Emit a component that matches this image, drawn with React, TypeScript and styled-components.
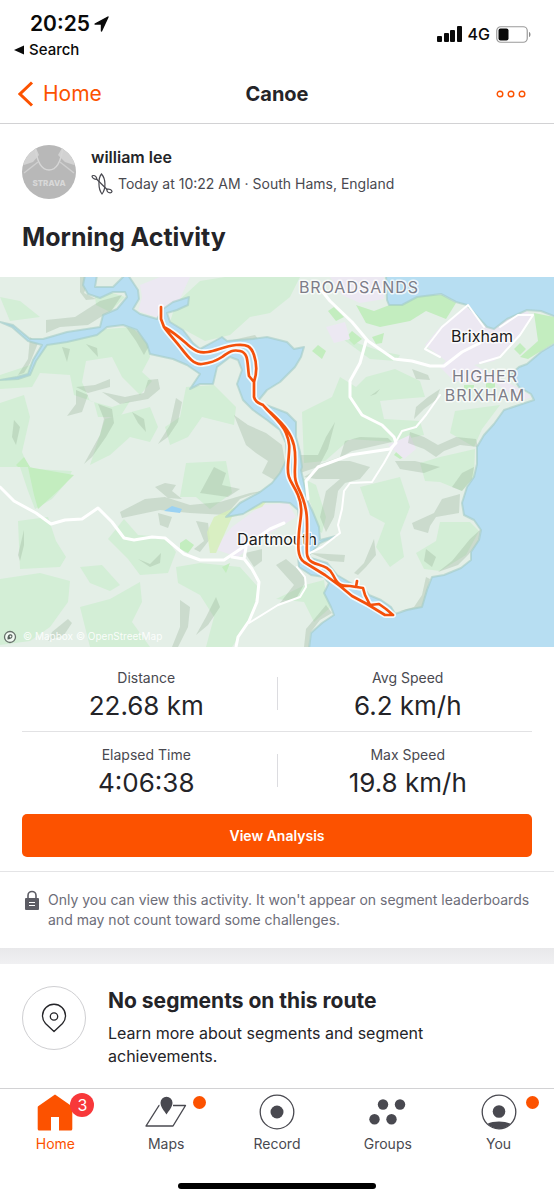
import React from "react";
import styled, { createGlobalStyle } from "styled-components";

const ORANGE = "#fc5200";
const INK = "#242428";
const SLATE = "#494950";
const SANS = 'Inter, "Liberation Sans", sans-serif';

const GlobalStyle = createGlobalStyle`
  *, *::before, *::after { box-sizing: border-box; }
  body { margin: 0; background: #fff; color: ${INK}; font-family: ${SANS}; }
  h1, h2, p, dl, dd { margin: 0; }
  button { border: 0; background: none; padding: 0; font: inherit; color: inherit; cursor: pointer; }
  a { color: inherit; text-decoration: none; }
  svg { display: block; flex: none; }
`;

const Page = styled.div`
  min-height: 100vh;
  display: flex;
  flex-direction: column;
`;

const StatusBar = styled.div`
  display: flex;
  justify-content: space-between;
  align-items: flex-start;
  height: 64px;
  padding: 12px 23px 0 14px;
  color: #0a0a0a;
`;

const Clock = styled.div`
  display: flex;
  align-items: center;
  gap: 4px;
  padding-left: 16px;
  font-size: 21px;
  line-height: 24px;
  font-weight: 600;
`;

const BackToApp = styled.button`
  display: flex;
  align-items: center;
  gap: 5px;
  margin-top: 4px;
  font-size: 15px;
  line-height: 20px;
  font-weight: 500;
`;

const Signals = styled.div`
  display: flex;
  align-items: center;
  gap: 6px;
  padding-top: 12px;
  font-size: 16px;
  line-height: 20px;
  font-weight: 500;
`;

const NavBar = styled.header`
  display: grid;
  grid-template-columns: 1fr auto 1fr;
  align-items: center;
  height: 60px;
  padding: 0 28px 0 18px;
  border-bottom: 1px solid #d2d2d4;
`;

const BackButton = styled.button`
  display: flex;
  align-items: center;
  gap: 9px;
  color: ${ORANGE};
  font-size: 21px;
  line-height: 28px;
`;

const NavTitle = styled.h1`
  padding-left: 10px;
  font-size: 20px;
  line-height: 28px;
  font-weight: 700;
`;

const MoreButton = styled.button`
  justify-self: end;
`;

const Author = styled.section`
  display: flex;
  align-items: flex-start;
  gap: 15px;
  padding: 21px 22px 0;
`;

const AuthorName = styled.p`
  font-size: 16px;
  line-height: 24px;
  font-weight: 600;
`;

const AuthorMeta = styled.p`
  display: flex;
  align-items: center;
  gap: 5px;
  margin-top: 3px;
  font-size: 14px;
  line-height: 24px;
  color: ${SLATE};
`;

const ActivityTitle = styled.h2`
  padding: 22px 22px 24px;
  font-size: 25px;
  line-height: 32px;
  font-weight: 700;
`;

const MapLink = styled.a`
  display: block;
`;

const MapCanvas = styled.svg`
  width: 100%;
  height: auto;
`;

const Stats = styled.dl`
  padding: 8px 16px 0;
`;

const StatRow = styled.div`
  display: grid;
  grid-template-columns: 1fr 1px 1fr;
  align-items: center;
  height: 76px;
`;

const StatRule = styled.div`
  height: 1px;
  margin: 0 6px;
  background: #e2e2e4;
`;

const StatSplit = styled.div`
  height: 33px;
  background: #dcdce0;
`;

const Stat = styled.div`
  padding-top: 4px;
  text-align: center;
`;

const StatLabel = styled.dt`
  font-size: 14px;
  line-height: 20px;
  color: ${SLATE};
`;

const StatValue = styled.dd`
  margin-top: 2px;
  font-size: 26px;
  line-height: 32px;
`;

const Action = styled.div`
  padding: 6px 22px 14px;
  border-bottom: 1px solid #e4e4e6;
`;

const PrimaryButton = styled.button`
  width: 100%;
  height: 43px;
  border-radius: 5px;
  background: ${ORANGE};
  color: #fff;
  font-size: 14px;
  line-height: 20px;
  font-weight: 600;
`;

const Notice = styled.div`
  display: flex;
  align-items: flex-start;
  gap: 9px;
  padding: 18px 16px 18px 25px;
  color: #6d6d78;
`;

const NoticeText = styled.p`
  max-width: 500px;
  font-size: 14px;
  line-height: 20px;
`;

const Band = styled.div`
  height: 16px;
  background: linear-gradient(#e8e8ea, #f0f0f2);
`;

const Segments = styled.section`
  display: flex;
  align-items: flex-start;
  gap: 22px;
  padding: 22px 22px 20px;
`;

const RoundIcon = styled.div`
  display: grid;
  place-items: center;
  flex: none;
  width: 64px;
  height: 64px;
  border: 1px solid #cfcfd2;
  border-radius: 50%;
`;

const SegmentsTitle = styled.h2`
  font-size: 21px;
  line-height: 30px;
  font-weight: 700;
`;

const SegmentsText = styled.p`
  max-width: 350px;
  margin-top: 6px;
  font-size: 16px;
  line-height: 23px;
`;

const TabBar = styled.nav`
  margin-top: auto;
  border-top: 1px solid #d2d2d4;
`;

const Tabs = styled.div`
  display: grid;
  grid-template-columns: repeat(5, 1fr);
  height: 94px;
`;

const Tab = styled.a<{ $active?: boolean }>`
  display: flex;
  flex-direction: column;
  align-items: center;
  gap: 4px;
  padding-top: 5px;
  font-size: 14px;
  line-height: 20px;
  color: ${(p) => (p.$active ? ORANGE : SLATE)};
`;

const TabIcon = styled.span`
  position: relative;
  display: grid;
  place-items: center;
  width: 42px;
  height: 36px;
`;

const CountBadge = styled.span`
  position: absolute;
  top: -1px;
  right: -18px;
  width: 24px;
  height: 24px;
  border-radius: 50%;
  background: #f8383a;
  color: #fff;
  font-size: 16px;
  line-height: 24px;
  text-align: center;
`;

const DotBadge = styled.span`
  position: absolute;
  top: 2px;
  right: -19px;
  width: 13px;
  height: 13px;
  border-radius: 50%;
  background: ${ORANGE};
`;

const HomeIndicator = styled.div`
  width: 198px;
  height: 6px;
  margin: 0 auto 11px;
  border-radius: 3px;
  background: #000;
`;

const hills = [
  "M46,43 L75,40 L100,24 L122,18 L112,33 L88,48 L60,50 L46,56Z",
  "M62,70 L70,72 L67,85Z",
  "M86,67 L97,71 L98,80Z",
  "M76,110 L95,108 L110,102 L110,110 L88,116Z",
  "M76,113 L88,118 L82,135 L67,139 L76,127Z",
  "M102,115 L125,120 L144,116 L148,103 L158,102 L160,112 L148,122 L120,127Z",
  "M98,127 L112,132 L114,146 L106,160 L92,180 L84,187 L100,158 L104,142Z",
  "M132,135 L144,142 L146,155 L138,146Z",
  "M176,121 L182,125 L178,145 L168,160 L158,167 L170,148Z",
  "M14,143 L20,150 L16,168 L12,160Z",
  "M30,60 L38,66 L30,86 L24,96 L18,98 L28,82Z",
  "M126,50 L140,55 L150,67 L144,78 L136,64Z",
  "M80,0 L90,0 L84,16 L96,22 L86,23 L80,15Z",
  "M120,235 L145,222 L165,220 L190,228 L220,225 L250,216 L262,214 L240,222 L226,238 L190,236 L160,233 L122,241Z",
  "M155,210 L165,206 L176,208 L172,214 L182,222 L168,221Z",
  "M200,216 L214,190 L226,196 L222,208 L240,212 L228,220Z",
  "M158,236 L172,240 L168,251 L160,248Z",
  "M196,244 L208,246 L210,262 L200,275 L194,272 L204,264Z",
  "M138,282 L150,287 L161,276 L160,286 L150,290Z",
  "M18,278 L24,253 L24,268 L20,284Z",
  "M180,323 L190,330 L188,350 L178,370 H172 L180,350Z",
  "M216,320 L220,330 L208,348 L196,358 L206,340Z",
  "M52,355 L68,342 L72,346 L64,358 L48,364Z",
  "M234,138 L248,148 L266,156 L282,168 L286,190 L278,205 L262,196 L268,184 L256,176 L246,168Z",
  "M210,68 L222,60 L226,68 L212,73Z M228,64 L255,58 L258,62 L236,67Z",
  "M299,178 L318,178 L326,160 L335,145 L328,172 L320,187 L340,180 L345,164 L360,160 L388,161 L392,165 L370,170 L352,174 L330,186 L300,196Z",
  "M416,130 L428,120 L440,112 L436,123 L424,132 L414,142Z",
  "M410,155 L424,160 L438,168 L456,160 L476,162 L478,170 L460,168 L444,174 L436,180 L424,172 L408,166Z",
  "M412,92 L428,98 L430,103 L416,102Z M370,119 L380,112 L376,117Z",
  "M304,200 L330,184 L350,184 L370,190 L360,202 L345,206 L338,214 L334,240 L326,255 L320,240 L326,214 L340,202 L316,202Z",
  "M395,184 L415,184 L440,190 L424,196 L400,192Z",
  "M434,236 L442,222 L460,217 L459,236 L436,240 L430,249 L428,256 L414,252 L412,246Z",
  "M354,296 L364,286 L374,262 L376,278 L366,290 L358,298Z",
  "M310,276 L345,278 L344,285 L330,284Z",
  "M452,210 L462,196 L474,190 L472,202 L462,214Z",
  "M426,272 L436,280 L432,290 L424,284Z",
  "M470,262 L481,252 L478,266 L468,278 L458,288 L438,295 L452,284Z",
  "M414,330 L422,318 L426,300 L430,302 L422,332 L400,334Z",
  "M310,356 L320,343 L332,336 L326,328 L316,340 L306,352 L304,370 H309Z",
  "M245,276 L262,272 L262,284 L254,290Z",
  "M276,288 L286,282 L300,294 L306,304 L296,322 L280,326 L294,308Z",
];

const meadows = [
  "M0,20 L20,24 L40,40 L10,44Z",
  "M94,10 L125,20 L110,35 L96,28Z",
  "M106,52 L132,50 L148,68 L150,80 L142,95 L152,104 L140,118 L122,100 L112,80 L86,84 L82,105 L90,124 L112,130 L130,124 L120,140 L98,140 L94,125 L74,118 L70,98 L40,96 L32,110 L0,112 V98 L30,88 L44,66 L78,60Z",
  "M0,126 L24,118 L30,140 L22,175 L28,190 L0,190Z",
  "M186,110 L214,108 L236,130 L234,148 L202,140 L188,160 L170,168 L165,150 L180,140Z",
  "M176,26 L200,4 L225,0 H300 L290,20 L270,36 L250,40 L230,58 L205,64 L170,45Z",
  "M105,142 L150,130 L158,150 L150,165 L130,160 L110,178 L90,188Z",
  "M18,184 L34,192 L72,194 L66,206 L52,222 L35,232 L28,214Z",
  "M18,244 L48,240 L56,264 L66,280 L60,290 L20,292Z",
  "M0,302 L40,296 L70,304 L68,325 L50,350 L30,364 L0,368Z",
  "M80,290 L102,288 L120,308 L110,314 L90,306Z",
  "M108,262 L124,242 L138,258 L165,260 L176,275 L168,296 L140,298 L128,282Z",
  "M186,186 L226,184 L232,216 L210,232 L196,220 L180,220Z",
  "M176,290 L200,286 L240,290 L258,310 L252,340 L232,370 H206 L214,340 L200,318 L178,306Z",
  "M80,330 L110,322 L140,305 L142,325 L132,345 L150,370 H90Z",
  "M302,135 L332,120 L340,100 L356,110 L366,100 L395,92 L420,104 L425,120 L400,122 L380,124 L384,142 L420,144 L424,158 L392,165 L350,162 L325,184 L304,186Z",
  "M455,134 L500,128 L482,152 L474,170 L450,156Z",
  "M360,210 L400,200 L410,230 L400,256 L404,280 L390,290 L376,270 L385,246 L370,238Z",
  "M440,180 L475,172 L474,200 L462,214 L440,205 L425,204 L420,186Z",
  "M440,245 L470,245 L479,254 L466,278 L440,294 L424,292 L416,276 L436,264Z",
  "M305,308 L324,303 L326,318 L331,330 L314,345 L304,325 L276,322Z",
  "M300,200 L316,208 L326,240 L322,256 L316,252 L312,230Z",
  "M340,60 L380,74 L400,78 L396,84 L370,82Z",
];

const brightGreens = [
  "M356,28 L374,34 L400,24 L420,18 L442,18 L456,26 L446,42 L426,34 L410,44 L380,50 L366,46Z",
  "M534,36 L554,40 V66 L541,74 L528,82 L520,80 L538,64Z",
  "M328,34 L334,30 L344,40 L336,44Z M346,60 L352,54 L362,62 L354,68Z M312,74 L318,68 L326,74 L322,82Z",
  "M488,76 L494,70 L500,74 L496,80Z M514,72 L520,66 L526,72 L520,78Z M394,178 L400,170 L408,178 L400,182Z",
  "M372,60 L384,56 L382,66 L376,67Z M464,108 h10 v5 h-10Z M486,106 h9 v5 h-9Z",
  "M28,190 L74,198 L60,212 L38,232 L34,218Z",
  "M16,188 L24,180 L30,190 H18Z M180,266 L186,262 L194,268 L188,276 L180,272Z M222,290 L230,286 L226,296Z",
];

function ActivityMap() {
  const track =
    "M161,30 L161,42 L164,50 C175,56 180,61 188,68 S200,76 208,75 S225,69 236,68 S251,69 254,78 S257,96 254,105 L254,120 Q255,125 263,128 C268,134 280,143 287,153 S296,172 295,190 S298,208 303,222 S307,246 307,260 S305,281 312,285 S328,288 333,298 S340,309 350,309 L356,310 L357,304 M350,309 L363,311 L365,318 L370,328 L379,327 L386,332 L393,338 L385,338 L367,327 L352,319 L340,309 L325,298 L304,285 C297,280 298,268 299,255 S304,232 298,218 S287,203 288,188 S291,168 286,156 S270,137 263,128 M254,105 L249,99 C247,86 249,76 240,74 S228,76 222,80 S210,86 202,87 S188,80 181,71 S168,56 164,50";
  return (
    <MapCanvas viewBox="0 0 554 370" role="img" aria-label="Route on the river Dart">
      <rect width="554" height="370" fill="#e4efe7" />
      <g fill="#d3eed6">
        {meadows.map((d) => (
          <path key={d} d={d} />
        ))}
      </g>
      <g fill="#c3edbf">
        {brightGreens.map((d) => (
          <path key={d} d={d} />
        ))}
      </g>
      <g fill="#ece8f2">
        <path d="M140,8 L160,0 H190 L178,26 L162,42 L138,34 L142,20Z" />
        <path d="M330,0 H384 L384,22 L360,26 L342,18Z" />
        <path d="M326,50 L345,45 L350,62 L334,66Z" />
        <path d="M425,68 L440,50 L467,30 L487,50 L507,42 L527,34 L533,40 L518,60 L494,84 L474,88 L520,112 L532,120 L520,124 L496,106 L454,104 L440,90 L446,84Z" />
        <path d="M214,272 L232,250 L262,228 L288,226 L296,240 L280,250 L260,262 L238,280Z" />
        <path d="M388,168 L410,158 L416,172 L404,182Z" />
      </g>
      <g fill="#93ab92" fillOpacity="0.3">
        {hills.map((d) => (
          <path key={d} d={d} />
        ))}
      </g>
      <path
        d="M207,255 L214,240 L240,228 L270,220 L262,230 L232,240 L216,276 L210,276Z"
        fill="#d6efb9"
        fillOpacity="0.8"
      />
      <g fill="#b7def2" stroke="#a3cbc4" strokeOpacity="0.6" strokeWidth="2" strokeLinejoin="round">
        <path d="M386,-2 L387,23 L389,28 L402,28 L417,20 L441,17 L456,25 L467,28 L487,50 L494,52 L507,42 L527,33 L541,34 L556,40 V-2Z" />
        <path d="M556,66 L541,75 L527,87 L519,90 L511,97 L519,110 L531,117 L534,123 L519,128 L504,133 L494,147 L484,158 L477,170 L477,187 L474,200 L467,210 L462,226 L464,238 L474,243 L481,253 L479,263 L471,275 L471,283 L461,291 L444,298 L432,300 L427,313 L422,330 L407,333 L395,337 L391,330 L381,323 L369,318 L364,311 L354,308 L337,298 L327,286 L311,281 L309,278 L320,266 L336,259 L320,263 L319,250 L312,233 L307,223 L304,206 L301,193 L302,190 L300,175 L296,160 L296,145 L287,136 L274,131 L266,128 L258,124 L267,113 L280,105 L295,90 L301,80 L304,70 L294,72 L287,65 L267,60 L253,62 L227,64 L222,60 L213,65 L200,72 L193,66 L183,53 L170,45 L167,36 L177,33 L188,28 L189,20 L173,25 L163,32 L157,42 L140,37 L133,32 L139,22 L138,13 L128,-2 H125 L113,10 L95,10 L97,-2 H85 L83,8 L88,17 L100,21 L113,15 L125,15 L127,20 L117,32 L103,38 L100,50 L67,55 L43,62 L30,62 L13,48 L0,45 L12,50 L28,64 L42,68 L33,83 L28,97 L17,100 L0,103 L18,102 L30,98 L36,84 L47,68 L67,65 L97,58 L107,50 L123,48 L137,53 L147,67 L150,77 L173,82 L187,88 L200,97 L190,112 L200,107 L213,107 L217,90 L230,80 L238,83 L242,93 L237,107 L243,123 L253,133 L267,143 L280,153 L286,166 L287,182 L280,196 L272,206 L260,215 L240,226 L226,240 L243,237 L263,225 L280,225 L290,226 L298,233 L300,250 L297,270 L299,290 L311,298 L324,300 L329,306 L324,316 L331,330 L334,338 L322,346 L311,356 L309,372 H556Z" />
        <path d="M164,234 L172,229 L182,232 L180,236Z" stroke="none" fill="#9bd2f3" />
      </g>
      <g fill="none" stroke="#fff" strokeWidth="3" strokeLinejoin="round" strokeLinecap="round">
        <path d="M0,210 L14,224 L36,236 L51,247 L65,243 L82,242 L98,231 L112,245 L124,261 L134,263 L152,260 L165,261 L184,277 L200,283 L224,283 L236,275 L270,252 L284,246" />
        <path d="M232,280 L244,282 L246,270 M245,283 L252,292 L259,305 L257,325 L249,344 L238,360 L236,370" />
        <path d="M249,346 L278,328 L300,320 L306,310 L305,300 L297,290" strokeWidth="2" />
        <path d="M322,14 L330,24 L352,45 L368,64 L394,82 L412,84 L430,89 L444,89 L462,75 L480,66" />
        <path d="M425,72 L442,50 L468,28 L484,50 M425,72 L440,80" strokeWidth="2" />
        <path d="M480,86 L500,80 L520,58 L533,38 L518,38 L500,50" strokeWidth="2" />
        <path d="M366,64 L360,86 L350,104 L350,120 L362,138 L382,148 L394,160 L396,166 L390,172 L350,178 L318,190 L306,204 L308,222" />
        <path d="M440,118 L426,138 L416,150 L402,154 L394,168 L384,186 L372,205 L350,206 L344,214 L342,232 L338,248 L340,256 L322,270 L306,278" strokeWidth="2" />
      </g>
      <g fontFamily={SANS} stroke="#fff" strokeOpacity="0.75" strokeWidth="3" paintOrder="stroke" strokeLinejoin="round">
        <g fontSize="16" fill="#7d7d88" letterSpacing="1" textAnchor="middle">
          <text x="359" y="16">BROADSANDS</text>
          <text x="485" y="105">HIGHER</text>
          <text x="485" y="124">BRIXHAM</text>
        </g>
        <g fontSize="16" fill="#1c1c20" textAnchor="middle">
          <text x="482" y="65">Brixham</text>
          <text x="277" y="268">Dartmouth</text>
        </g>
      </g>
      <g fill="none" strokeLinejoin="round" strokeLinecap="round">
        <path d={track} stroke="#fff" strokeOpacity="0.85" strokeWidth="6" />
        <path d={track} stroke="#f4500b" strokeWidth="2.7" />
      </g>
      <circle cx="10" cy="360" r="5.5" fill="#fff" fillOpacity="0.7" stroke="#66706a" strokeWidth="1.3" />
      <path d="M7.5,362.5 C7,358 9.5,356.5 11.5,357.5 S12.5,362.5 7.5,362.5Z" fill="#55605a" />
      <circle cx="10.5" cy="359.5" r="0.9" fill="#fff" />
      <text x="23" y="363" fontFamily={SANS} fontSize="10" fill="#fff" fillOpacity="0.9">
        © Mapbox © OpenStreetMap
      </text>
    </MapCanvas>
  );
}

const Avatar = () => (
  <svg width="54" height="54" viewBox="0 0 54 54" role="img" aria-label="william lee">
    <defs>
      <clipPath id="avatarClip">
        <circle cx="27" cy="27" r="27" />
      </clipPath>
    </defs>
    <g clipPath="url(#avatarClip)">
      <rect width="54" height="54" fill="#b8b8b8" />
      <path d="M0,18 L6,6 L14,3 L17,10 L11,17 L2,20Z M54,18 L48,6 L40,3 L36,10 L43,17 L52,20Z" fill="#d2d2d2" />
      <path d="M13,2 C15,17 20,25 27,25 S39,17 41,2" fill="none" stroke="#d6d6d6" strokeWidth="1.6" />
      <path d="M2,28 L16,17 M52,28 L38,17" fill="none" stroke="#cfcfcf" strokeWidth="1.5" />
      <text x="27" y="41" textAnchor="middle" fontFamily={SANS} fontSize="8" fontWeight="800" fill="#d8d8d8">
        STRAVA
      </text>
    </g>
  </svg>
);

const CanoeIcon = () => (
  <svg width="22" height="22" viewBox="0 0 22 22" fill="none" stroke={SLATE} strokeWidth="1.2" strokeLinecap="round">
    <path d="M10.5,1 C7,5 7,16 11,21 C15,16 15,6 10.5,1Z" />
    <path d="M5.5,6 L16,16.5" />
    <path d="M5.7,6.3 C3.5,6.5 1.2,5 1,3.3 C1.2,2.2 3.5,2.2 4.8,3.6 C5.5,4.4 5.9,5.3 5.7,6.3Z" />
    <path d="M15.9,16.2 C18.5,15.6 20.8,16.8 21,18.6 C20.5,20.3 17.8,20 16.7,18.8 C16,18 15.8,17 15.9,16.2Z" />
  </svg>
);

const LockIcon = () => (
  <svg width="14" height="21" viewBox="0 0 14 21">
    <path d="M3,9 V5.5 a4,4 0 0 1 8,0 V9" fill="none" stroke="#5c5c64" strokeWidth="1.6" />
    <rect x="0" y="8" width="14" height="12" rx="1" fill="#5c5c64" />
    <path d="M4,12.5 h6 M4,15.5 h6" stroke="#fff" strokeWidth="1.2" />
  </svg>
);

const PinIcon = () => (
  <svg width="26" height="30" viewBox="0 0 26 30" fill="none" stroke={INK} strokeWidth="1.3" strokeLinejoin="round">
    <path d="M13,28.500 L4.500,20.500 A11.500,11.500 0 1 1 21.500,20.500Z" />
    <circle cx="13" cy="13.5" r="3.7" />
  </svg>
);

const HomeIcon = () => (
  <svg width="36" height="37" viewBox="0 0 36 37" fill={ORANGE}>
    <path d="M18,0.5 L34.5,12 a1.5,1.5 0 0 1 0.8,1.4 V35 a1.5,1.5 0 0 1 -1.5,1.5 H22 V23 H14 V36.5 H2.200 a1.5,1.5 0 0 1 -1.5,-1.5 V13.4 a1.5,1.5 0 0 1 0.8,-1.4Z" />
  </svg>
);

const MapsIcon = () => (
  <svg width="42" height="32" viewBox="0 0 42 32">
    <path d="M14.5,9.5 H14 L1,30 H28 L40.5,9.5 H28" fill="none" stroke={SLATE} strokeWidth="1.4" strokeLinejoin="round" />
    <path d="M21.500,18.5 C19,14.5 15.5,11 15.5,6.7 a6,6 0 0 1 12,0 C27.5,11 24,14.5 21.500,18.5Z" fill={SLATE} />
  </svg>
);

const RecordIcon = () => (
  <svg width="36" height="36" viewBox="0 0 36 36">
    <circle cx="18" cy="18" r="16.8" fill="none" stroke={SLATE} strokeWidth="1.3" />
    <circle cx="18" cy="18" r="6.5" fill={SLATE} />
  </svg>
);

const GroupsIcon = () => (
  <svg width="37" height="26" viewBox="0 0 37 26" fill={SLATE}>
    <circle cx="14" cy="5.5" r="5.2" />
    <circle cx="31" cy="5.5" r="5.2" />
    <circle cx="5.5" cy="20.3" r="5.2" />
    <circle cx="22.5" cy="20.3" r="5.2" />
  </svg>
);

const YouIcon = () => (
  <svg width="36" height="36" viewBox="0 0 36 36">
    <circle cx="18" cy="18" r="16.8" fill="none" stroke={SLATE} strokeWidth="1.3" />
    <circle cx="18" cy="17.5" r="6.3" fill={SLATE} />
    <path d="M6.5,29.8 C12,26.6 24,26.6 29.5,29.8 C23,36.4 13,36.4 6.5,29.8Z" fill={SLATE} />
  </svg>
);

const stats = [
  [
    { label: "Distance", value: "22.68 km" },
    { label: "Avg Speed", value: "6.2 km/h" },
  ],
  [
    { label: "Elapsed Time", value: "4:06:38" },
    { label: "Max Speed", value: "19.8 km/h" },
  ],
];

const tabs = [
  { label: "Home", icon: <HomeIcon />, active: true, count: 3 },
  { label: "Maps", icon: <MapsIcon />, dot: true },
  { label: "Record", icon: <RecordIcon /> },
  { label: "Groups", icon: <GroupsIcon /> },
  { label: "You", icon: <YouIcon />, dot: true },
];

export default function App() {
  return (
    <Page>
      <GlobalStyle />
      <StatusBar>
        <div>
          <Clock>
            20:25
            <svg width="15" height="16" viewBox="0 0 15 16">
              <path
                d="M14,1 L1,8 H7.5 V15Z"
                fill="#0a0a0a"
                stroke="#0a0a0a"
                strokeWidth="1.4"
                strokeLinejoin="round"
              />
            </svg>
          </Clock>
          <BackToApp type="button">
            <svg width="10" height="10" viewBox="0 0 10 10">
              <path d="M0,5 L10,0.5 V9.5Z" fill="#0a0a0a" />
            </svg>
            Search
          </BackToApp>
        </div>
        <Signals>
          <svg width="25" height="16" viewBox="0 0 25 16" fill="#0a0a0a">
            <rect x="0" y="10" width="5" height="6" rx="1" />
            <rect x="7" y="7" width="5" height="9" rx="1" />
            <rect x="13" y="4" width="5" height="12" rx="1" />
            <rect x="20" y="0" width="5" height="16" rx="1" />
          </svg>
          4G
          <svg width="35" height="17" viewBox="0 0 35 17">
            <rect x="0.75" y="0.75" width="30.5" height="15.5" rx="4" fill="none" stroke="#9a9a9a" strokeWidth="1.2" />
            <rect x="2.5" y="2.5" width="10" height="12" rx="2" fill="#0a0a0a" />
            <path d="M33,6 c2,0.5 2,4.5 0,5Z" fill="#8a8a8a" />
          </svg>
        </Signals>
      </StatusBar>

      <NavBar>
        <BackButton type="button">
          <svg width="16" height="26" viewBox="0 0 16 26" fill="none" stroke={ORANGE} strokeWidth="3">
            <path d="M14,1.5 L2,13 L14,24.5" />
          </svg>
          Home
        </BackButton>
        <NavTitle>Canoe</NavTitle>
        <MoreButton type="button" aria-label="More options">
          <svg width="30" height="8" viewBox="0 0 30 8" fill="none" stroke={ORANGE} strokeWidth="1.4">
            <circle cx="4" cy="4" r="2.8" />
            <circle cx="15" cy="4" r="2.8" />
            <circle cx="26" cy="4" r="2.8" />
          </svg>
        </MoreButton>
      </NavBar>

      <main>
        <Author>
          <Avatar />
          <div>
            <AuthorName>william lee</AuthorName>
            <AuthorMeta>
              <CanoeIcon />
              Today at 10:22 AM · South Hams, England
            </AuthorMeta>
          </div>
        </Author>
        <ActivityTitle>Morning Activity</ActivityTitle>
        <MapLink href="#map">
          <ActivityMap />
        </MapLink>

        <Stats>
          {stats.map(([left, right], i) => (
            <React.Fragment key={left.label}>
              {i > 0 && <StatRule />}
              <StatRow>
                <Stat>
                  <StatLabel>{left.label}</StatLabel>
                  <StatValue>{left.value}</StatValue>
                </Stat>
                <StatSplit />
                <Stat>
                  <StatLabel>{right.label}</StatLabel>
                  <StatValue>{right.value}</StatValue>
                </Stat>
              </StatRow>
            </React.Fragment>
          ))}
        </Stats>
        <Action>
          <PrimaryButton type="button">View Analysis</PrimaryButton>
        </Action>

        <Notice>
          <LockIcon />
          <NoticeText>
            Only you can view this activity. It won't appear on segment leaderboards and may not count toward some
            challenges.
          </NoticeText>
        </Notice>
        <Band />

        <Segments>
          <RoundIcon>
            <PinIcon />
          </RoundIcon>
          <div>
            <SegmentsTitle>No segments on this route</SegmentsTitle>
            <SegmentsText>Learn more about segments and segment achievements.</SegmentsText>
          </div>
        </Segments>
      </main>

      <TabBar>
        <Tabs>
          {tabs.map((tab) => (
            <Tab key={tab.label} href={`#${tab.label.toLowerCase()}`} $active={tab.active}>
              <TabIcon>
                {tab.icon}
                {tab.count && <CountBadge>{tab.count}</CountBadge>}
                {tab.dot && <DotBadge />}
              </TabIcon>
              {tab.label}
            </Tab>
          ))}
        </Tabs>
        <HomeIndicator />
      </TabBar>
    </Page>
  );
}
